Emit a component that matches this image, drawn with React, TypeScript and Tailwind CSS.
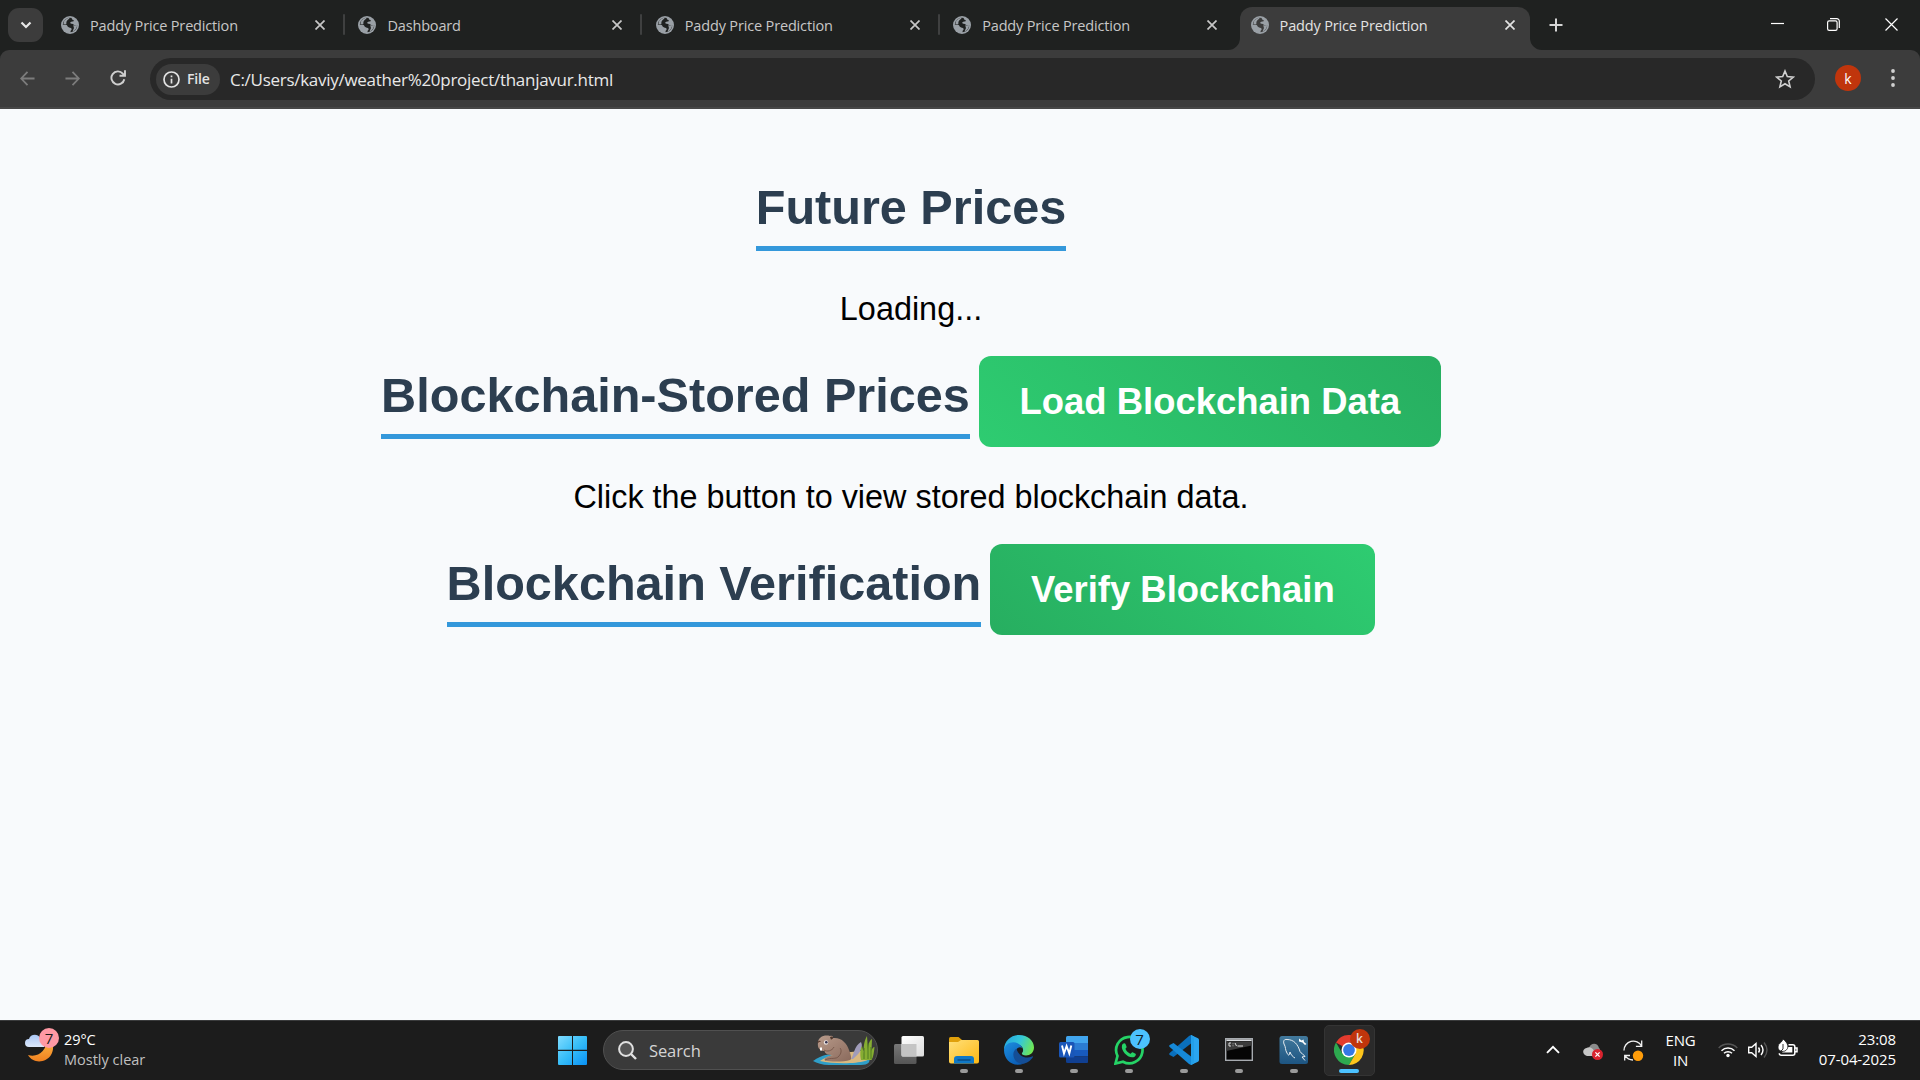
import React from 'react';

const ui = "font-['Open_Sans','Noto_Sans',sans-serif]";

function Globe() {
  return (
    <svg viewBox="0 0 18 18" className="h-[18px] w-[18px] shrink-0">
      <circle cx="9" cy="9" r="9" fill="#9aa0a6" />
      <path
        d="M10.800 2c-.3 1.300.6 1.600 1.500 2 .8.400.5 1.300-.3 1.500-1.200.2-2.300 0-2.700 1.100-.2.900.7 1.200 1.600 1.200 1.500 0 1.900 1.300 3 1.700.8.200 1.600 0 2.400-.1a7.300 7.300 0 0 1-6.600 6.900c-.4-.8-.1-1.400.4-2 .8-.8.700-1.700-.2-2.200-1.100-.6-2.500-.4-3.200-1.500-.4-.7-.3-1.500-1.200-1.700-1.200-.2-2.400-.1-3.700-.1A7.300 7.300 0 0 1 10.800 2Z"
        fill="currentColor"
      />
      <path d="M2.500 8.200C2.500 4.500 5.500 2 8.800 1.800 8 3.500 6.500 3.800 5.700 5.200c-.5 1-.2 2-.4 3Z" fill="#9aa0a6" />
      <path d="M12.500 8.900c1 .8 2.500.7 3.600.2a7 7 0 0 1-4.300 6.300c-.2-1.500 1.300-2.200 1.100-3.700-.1-1-.7-1.700-.4-2.800Z" fill="#9aa0a6" />
    </svg>
  );
}

function Cross({ color }: { color: string }) {
  return (
    <svg viewBox="0 0 10 10" className="h-[10px] w-[10px] shrink-0" stroke={color} strokeWidth="1.7" fill="none">
      <path d="M.5.500 9.500 9.500M9.500.500.500 9.500" />
    </svg>
  );
}

function Tab({ title, active, sep }: { title: string; active?: boolean; sep?: boolean }) {
  return (
    <div className="relative flex h-[50px] w-[297.4px] shrink-0 items-start pt-[7px]">
      {active && (
        <>
          <div className="absolute left-0 top-[7px] h-[43px] w-[290px] rounded-t-[12px] bg-[#3c3c3c]" />
          <svg viewBox="0 0 12 12" className="absolute bottom-0 left-[-12px] h-[12px] w-[12px]">
            <path d="M12 0v12H0A12 12 0 0 0 12 0Z" fill="#3c3c3c" />
          </svg>
          <svg viewBox="0 0 12 12" className="absolute bottom-0 left-[290px] h-[12px] w-[12px]">
            <path d="M0 0v12h12A12 12 0 0 1 0 0Z" fill="#3c3c3c" />
          </svg>
        </>
      )}
      <div className={`relative flex h-[36px] w-[275px] items-center pl-[11px] ${active ? 'text-[#3c3c3c]' : 'text-[#1f2120]'}`}>
        <Globe />
        <span className={`${ui} ml-[11px] flex-1 whitespace-nowrap pt-[1px] text-[14.500px] leading-[20px] tracking-[-0.160px] ${active ? 'text-[#e3e3e3]' : 'text-[#c7c7c7]'}`}>
          {title}
        </span>
        <Cross color={active ? '#e3e3e3' : '#c7c7c7'} />
      </div>
      {sep && <div className="relative ml-[18px] mt-[7px] h-[21px] w-[2px] rounded-full bg-[#3f4040]" />}
    </div>
  );
}

function TitleBar() {
  return (
    <div className="flex h-[50px] bg-[#1f2120]">
      <div className="ml-[8px] mt-[8px] flex h-[34px] w-[35px] shrink-0 items-center justify-center rounded-[11px] bg-[#3c3c3c]">
        <svg viewBox="0 0 12 8" className="h-[8px] w-[12px]" fill="none" stroke="#e8e8e8" strokeWidth="2.200">
          <path d="m1.500 1.500 4.500 4.500 4.500-4.500" />
        </svg>
      </div>
      <div className="ml-[7px] flex shrink-0">
        <Tab title="Paddy Price Prediction" sep />
        <Tab title="Dashboard" sep />
        <Tab title="Paddy Price Prediction" sep />
        <Tab title="Paddy Price Prediction" />
        <Tab title="Paddy Price Prediction" active />
      </div>
      <svg viewBox="0 0 14 14" className="ml-[12px] mt-[18px] h-[14px] w-[14px]" stroke="#d5d5d5" strokeWidth="2">
        <path d="M7 .5v13M.5 7h13" />
      </svg>
      <div className="ml-auto flex pr-[22px]">
        <svg viewBox="0 0 13 13" className="mr-[43px] mt-[17px] h-[13px] w-[13px]" stroke="#fff" strokeWidth="1.200">
          <path d="M0 6.500h13" />
        </svg>
        <svg viewBox="0 0 13 13" className="mr-[45px] mt-[18px] h-[13px] w-[13px]" stroke="#fff" strokeWidth="1.200" fill="none">
          <rect x=".6" y="2.800" width="9.500" height="9.500" rx="1.600" />
          <path d="M3 .7h6.800a2.500 2.500 0 0 1 2.500 2.500V10" />
        </svg>
        <svg viewBox="0 0 13 13" className="mt-[18px] h-[13px] w-[13px]" stroke="#fff" strokeWidth="1.200">
          <path d="m.5.500 12 12M12.500.500l-12 12" />
        </svg>
      </div>
    </div>
  );
}

function Toolbar() {
  return (
    <div className="bg-[#1f2120]">
      <div className="flex h-[59px] items-start rounded-t-[9px] border-b-2 border-[#474747] bg-[#3c3c3c]">
        <svg viewBox="0 0 16 16" className="ml-[20px] mt-[21px] h-[15px] w-[15px]" stroke="#7c7c7c" strokeWidth="1.900" fill="none">
          <path d="M15.500 8H1.500M8 1 1.300 8 8 15" />
        </svg>
        <svg viewBox="0 0 16 16" className="ml-[30px] mt-[21px] h-[15px] w-[15px]" stroke="#7c7c7c" strokeWidth="1.900" fill="none">
          <path d="M.5 8h14M8 1l6.700 7L8 15" />
        </svg>
        <svg viewBox="0 0 16 16" className="ml-[30px] mt-[20px] h-[16px] w-[16px]" stroke="#cfcfcf" strokeWidth="1.900" fill="none">
          <path d="M14.300 9.200A6.500 6.500 0 1 1 12.800 3.600l1.800 1.900M15 .2v5.500H9.500" />
        </svg>
        <div className="ml-[24px] mt-[8px] flex h-[42px] w-[1665px] items-center rounded-full bg-[#282828] pl-[6px]">
          <div className="flex h-[31px] w-[64px] items-center rounded-full bg-[#3c3c3c] pl-[7px]">
            <svg viewBox="0 0 17 17" className="h-[17px] w-[17px]" fill="none" stroke="#e3e3e3" strokeWidth="1.700">
              <circle cx="8.500" cy="8.500" r="7.500" />
              <path d="M8.500 7.700v4.800M8.500 4.500v1.800" />
            </svg>
            <span className={`${ui} ml-[7px] text-[14px] font-semibold leading-[20px] tracking-[-0.2px] text-[#e3e3e3]`}>File</span>
          </div>
          <span className={`${ui} ml-[10px] flex-1 pt-[1px] text-[17px] leading-[22px] tracking-[-0.280px] text-[#e8e8e8]`}>
            C:/Users/kaviy/weather%20project/thanjavur.html
          </span>
          <svg viewBox="0 0 20 20" className="mr-[20px] h-[20px] w-[20px]" fill="none" stroke="#d0d0d0" strokeWidth="1.600">
            <path d="m10 2 2.300 5.600 6 .5-4.600 3.900 1.400 5.900-5.100-3.200-5.100 3.200L6.300 12 1.700 8.100l6-.5Z" />
          </svg>
        </div>
        <div className={`${ui} ml-[20px] mt-[15px] flex h-[26px] w-[26px] items-center justify-center rounded-full bg-[#c0350c] text-[14px] text-white`}>k</div>
        <svg viewBox="0 0 4 20" className="ml-[30px] mt-[18px] h-[20px] w-[4px]" fill="#d0d0d0">
          <circle cx="2" cy="3" r="1.900" />
          <circle cx="2" cy="10" r="1.900" />
          <circle cx="2" cy="17" r="1.900" />
        </svg>
      </div>
    </div>
  );
}

function Heading({ children }: { children: React.ReactNode }) {
  return (
    <h2 className="h-[81px] whitespace-nowrap border-b-[5px] border-[#3498db] text-[48.600px] font-bold leading-[75px] text-[#2c3e50]">
      {children}
    </h2>
  );
}

function Content() {
  const button = 'h-[91px] whitespace-nowrap rounded-[12px] px-[40.700px] text-[36.450px] font-bold leading-[88px] text-white';
  return (
    <main className="flex h-[911px] w-[1822px] flex-col items-center pt-[61px] font-['Liberation_Sans',Arial,sans-serif] text-[32.400px] text-black">
      <Heading>Future Prices</Heading>
      <p className="mt-[40px] h-[37px] leading-[37px]">Loading...</p>
      <div className="mt-[28px] flex h-[92px] gap-[9px]">
        <div className="mt-[2px]"><Heading>Blockchain-Stored Prices</Heading></div>
        <button className={`${button} bg-[linear-gradient(45deg,#2ecc71,#27ae60)]`}>Load Blockchain Data</button>
      </div>
      <p className="mt-[31px] h-[37px] leading-[37px]">Click the button to view stored blockchain data.</p>
      <div className="mt-[28px] flex h-[92px] gap-[9px]">
        <div className="mt-[2px]"><Heading>Blockchain Verification</Heading></div>
        <button className={`${button} bg-[linear-gradient(45deg,#27ae60,#2ecc71)]`}>Verify Blockchain</button>
      </div>
    </main>
  );
}

function Beaver() {
  return (
    <svg viewBox="0 0 62 31" className="h-[31px] w-[62px]">
      <defs>
        <linearGradient id="fur" x1="0" y1="0" x2="1" y2="1">
          <stop offset="0" stopColor="#b89a8a" />
          <stop offset="1" stopColor="#8a6a5c" />
        </linearGradient>
      </defs>
      <path d="M0 26c4-3 10-6 18-7l38 3c2 5-1 8-8 8H16C9 30 4 28 0 26Z" fill="#2f9fc9" />
      <path d="M7 26c6-4 13-7 22-8l27-3c3 5 1 10-4 11-10 3-32 3-45 0Z" fill="#d9b97f" />
      <path d="M38 24c3-4 3-13 10-17 3 6-2 12-8 17Z" fill="#a09cba" />
      <path d="M5 8C5 2 11-.5 17 1c2-.5 3 0 3 2 8-1 14 5 16 12 2 5 3 9 1 10-6 2-20 2-25 .5-2-2 2-4 8-5.500-5 0-8-1-8.500-4C8 16 4 14 5 8Z" fill="url(#fur)" />
      <path d="M12 25c6-3 11 0 14-4 2-2 3-6 1-8" fill="none" stroke="#745547" strokeWidth=".9" />
      <path d="M11 15c3 2 8 1 10-3" fill="none" stroke="#745547" strokeWidth=".9" />
      <circle cx="13" cy="7.500" r="2.200" fill="#e9e2e0" />
      <circle cx="13.300" cy="7.300" r="1.300" fill="#34304c" />
      <path d="M17 2.200c1.500-1.300 3.500-.4 3 1.300l-2 1.300Z" fill="#4d362c" />
      <path d="M5 7.800c0-1.200 1.500-1.800 2.500-1.200" stroke="#5b3d30" strokeWidth="1.200" fill="none" />
      <path d="M7 12.500h2v3H7z" fill="#fff" />
      <path d="M48 25c-1-5-1-11 1-14l2 8c-1-6 0-13 3-18l1 14c0-5 1-9 4-11l-.5 12c1-3 1.500-4 3-4-.5 5-1 10-3 13Z" fill="#86ad32" />
      <path d="M51 24V13M55 24V8M58 24V12" stroke="#4d7b20" strokeWidth="1" />
    </svg>
  );
}

const badge = `absolute flex h-[20px] w-[20px] items-center justify-center rounded-full ${ui}`;

function TaskApp({ children, active, idle }: { children: React.ReactNode; active?: boolean; idle?: boolean }) {
  return (
    <div className={`relative mx-[2px] mt-[4px] flex h-[51px] w-[51px] flex-col items-center rounded-[5px] pt-[10px] ${active ? 'border border-[#343434] bg-[#2a2a2a] !pt-[9px]' : ''}`}>
      <div className="h-[30px] w-[30px]">{children}</div>
      {!idle && <div className={`mt-[4px] h-[4px] rounded-full ${active ? 'w-[20px] bg-[#4cc2ff]' : 'w-[8px] bg-[#9a9a9a]'}`} />}
    </div>
  );
}

const icon = 'block h-[30px] w-[30px]';

function TaskApps() {
  return (
    <div className="ml-[3.500px] flex">
      <TaskApp idle>
        <svg viewBox="0 0 30 30" className={icon}>
          <defs>
            <linearGradient id="tvA" x2="1" y2="1"><stop stopColor="#fff" /><stop offset="1" stopColor="#dcdcdc" /></linearGradient>
            <linearGradient id="tvB" x2="0" y2="1"><stop stopColor="#777" /><stop offset="1" stopColor="#555" /></linearGradient>
          </defs>
          <rect x="0" y="9" width="22.500" height="20" rx="1.500" fill="url(#tvB)" />
          <rect x="7.500" y="1" width="22.500" height="20.500" rx="1.500" fill="url(#tvA)" />
          <path d="M7.500 9h15v12.500h-13.500a1.500 1.500 0 0 1-1.500-1.500Z" fill="#c4c4c4" />
        </svg>
      </TaskApp>
      <TaskApp>
        <svg viewBox="0 0 30 30" className={icon}>
          <defs><linearGradient id="fold" x2="1" y2="1"><stop stopColor="#ffe07a" /><stop offset="1" stopColor="#fdb813" /></linearGradient></defs>
          <path d="M0 3.500Q0 2 1.500 2h8l3.500 3v5H0Z" fill="#e0a00b" />
          <path d="M0 7h9l3-2h16.500Q30 5 30 6.500v20q0 2-2 2H2q-2 0-2-2Z" fill="url(#fold)" />
          <path d="M5 28.500V24q0-3 3-3h14q3 0 3 3v4.500Z" fill="#0f78c6" />
          <path d="M8.500 25h13" stroke="#0a4c86" strokeWidth="1.500" />
        </svg>
      </TaskApp>
      <TaskApp>
        <svg viewBox="0 0 30 30" className={icon}>
          <defs>
            <linearGradient id="eA" x1="0" y1=".3" x2="1" y2=".6"><stop stopColor="#26a8e0" /><stop offset=".5" stopColor="#35c8d8" /><stop offset="1" stopColor="#72e84e" /></linearGradient>
            <linearGradient id="eB" x1="0" y1="0" x2=".7" y2="1"><stop stopColor="#1d8fe0" /><stop offset="1" stopColor="#0a5cb4" /></linearGradient>
          </defs>
          <path d="M0 15C0 6 7 0 15 0c9 0 15 6 15 12.500 0 5-4 8-8 8-3.500 0-4.500-1.500-4-2.500 2-2 1.500-6-2.500-8C9 8 2 10 0 15Z" fill="url(#eA)" />
          <path d="M0 15c1-7 9-9.500 14-6.500 2 1 4 3 4 4.500-3-2-7 1-7 6 0 6 5 10 9 9.500C9 33 0 25 0 15Z" fill="url(#eB)" />
          <path d="M12.500 13.500C9 16 8.500 20 10.500 24c2.500 4.500 7 5.500 10 4.500 3.500-1 7-4 8.300-6.300.4-.8-.2-1-.8-.7C22 24.500 14 21 12.500 13.500Z" fill="#144e96" />
        </svg>
      </TaskApp>
      <TaskApp>
        <svg viewBox="0 0 30 30" className={icon}>
          <path d="M7 2.500Q7 1 8.500 1H29v7H7Z" fill="#41a5ee" />
          <path d="M7 8h22v7H7Z" fill="#2b7cd3" />
          <path d="M7 15h22v6.500H7Z" fill="#185abd" />
          <path d="M7 21.500h22V27q0 1-1 1H8.500Q7 28 7 26.500Z" fill="#103f91" />
          <rect x="0" y="7" width="15.500" height="15.500" rx="1.500" fill="#1a56b8" />
          <path d="m3 10.500 2 8 2.600-7.500 2.700 7.500 2-8" fill="none" stroke="#fff" strokeWidth="1.900" />
        </svg>
      </TaskApp>
      <TaskApp>
        <svg viewBox="0 0 30 30" className={icon} fill="none" stroke="#25d366">
          <path d="M1.500 28.500 3.500 21A13.200 13.200 0 1 1 9 26.700Z" strokeWidth="2.700" />
          <path d="M8 10.200c.5-1.700 2.800-2.700 3.500-1.200l1.100 2.700c.3 1-1.300 1.700-1.100 2.400.8 2 2.700 3.800 4.700 4.600.8.300 1.500-1.700 2.400-1.400l2.900 1.400c1 .8-.4 3.100-2 3.500C14 23.600 6.500 15.500 8 10.200Z" fill="#25d366" stroke="none" />
        </svg>
        <div className={`${badge} left-[26px] top-[4px] bg-[#4cc2ff] text-[15px] text-[#10202a]`}>7</div>
      </TaskApp>
      <TaskApp>
        <svg viewBox="0 0 30 30" className={icon}>
          <path d="m22 0 7 3.200Q30 4 30 5v20q0 1-1 1.700L22 30Z" fill="#2aa5f0" />
          <path d="M22 0v8.500L4.500 22 0.700 20q-1-1 0-2L20 1Z" fill="#0a6fbc" />
          <path d="M22 30v-8.500L4.500 8 .7 10q-1 1 0 2L20 29Z" fill="#1689d8" />
          <path d="m22 0 3 1.500v27L22 30Z" fill="#239fe9" />
        </svg>
      </TaskApp>
      <TaskApp>
        <svg viewBox="0 0 30 30" className={icon}>
          <rect x="1.700" y="3.700" width="26.600" height="21.600" fill="#050505" stroke="#a7abb0" strokeWidth="1.400" />
          <path d="M2.400 4.400h25.200v1.700H2.400Z" fill="#d9dce0" />
          <path d="M2.400 6.500h25.200v4L2.400 16Z" fill="#3b3b3b" />
          <path d="M7 8H5v3h2M9 8.500v.7M9 10.500v.7M11 8l1.500 3M13.500 11H19" stroke="#ddd" strokeWidth="1" fill="none" />
        </svg>
      </TaskApp>
      <TaskApp>
        <svg viewBox="0 0 30 30" className={icon}>
          <defs><linearGradient id="my" x2="0" y2="1"><stop stopColor="#42799c" /><stop offset="1" stopColor="#1d5582" /></linearGradient></defs>
          <rect x=".5" y="1" width="28.500" height="28" rx="2.500" fill="url(#my)" />
          <path d="M5 9c-1-3 0-5 3-4.500 7 0 11 5 13 12 1 2 4 3 5 5l-3 .500 3 3.500M5 9c2 3 1 6 3 9 1 2 2 3 2.500 1l.5-2c1 3 3 5 5 6" stroke="#e7edf1" strokeWidth="1" fill="none" />
          <path d="m20 3.500 2.500 2 2-1 .5 2.500 2.500 2-1.500 1-2.500-2.500-3.500-1Z" fill="#fff" />
        </svg>
      </TaskApp>
      <TaskApp active>
        <svg viewBox="0 0 30 30" className={icon}>
          <path d="M15 15 2 7.500A15 15 0 0 1 28 7.500H15Z" fill="#e33b2e" />
          <path d="M15 15 21.500 18.700 15 30A15 15 0 0 1 2 7.500L8.500 18.700Z" fill="#2da94f" />
          <path d="M15 8h13A15 15 0 0 1 15 30l6.500-11.300Z" fill="#fdc51b" />
          <circle cx="15" cy="15" r="7.500" fill="#fff" />
          <circle cx="15" cy="15" r="5.900" fill="#3578e5" />
        </svg>
        <div className={`${badge} left-[25px] top-[3px] bg-[#c0350c] text-[12px] font-semibold text-[#e9ddd9]`}>k</div>
      </TaskApp>
    </div>
  );
}

function Taskbar() {
  return (
    <footer className={`flex h-[60px] border-t border-[#3a3b3c] bg-[#1c1c1c] ${ui}`}>
      <div className="relative ml-[25px] w-[39px]">
        <svg viewBox="0 0 30 30" className="mt-[12px] h-[30px] w-[30px]">
          <defs>
            <linearGradient id="moon" x2="0" y2="1"><stop stopColor="#ffc24a" /><stop offset="1" stopColor="#f08020" /></linearGradient>
            <linearGradient id="cloud" x2="0" y2="1"><stop stopColor="#a9c6f4" /><stop offset="1" stopColor="#dce8fb" /></linearGradient>
          </defs>
          <path d="M22 3c6 4 8 12 4 19-5 8-18 9-23 0 10 3 20-4 19-19Z" fill="url(#moon)" />
          <path d="M4 14a4 4 0 0 1 0-8c1-5 9-6 11-1l4 2v7Z" fill="url(#cloud)" />
        </svg>
        <div className={`${badge} left-[14px] top-[7px] bg-[#ff99a4] text-[15px] text-[#1c1c1c]`}>7</div>
      </div>
      <div className="w-[494px] pt-[9px] text-[14.500px] leading-[20px]">
        <div className="tracking-[-0.1px] text-white">29°C</div>
        <div className="text-[#c0c0c0]">Mostly clear</div>
      </div>
      <svg viewBox="0 0 29 29" className="mt-[15px] h-[29px] w-[29px] shrink-0">
        <defs><linearGradient id="win" x2="1" y2="1"><stop stopColor="#80dcff" /><stop offset=".5" stopColor="#36bdf8" /><stop offset="1" stopColor="#0991f5" /></linearGradient></defs>
        <path d="M1 0h13v13.800H0V1Q0 0 1 0ZM15 0h13q1 0 1 1v12.800H15ZM0 15h14v14H1q-1 0-1-1ZM15 15h14v13q0 1-1 1H15Z" fill="url(#win)" />
      </svg>
      <div className="ml-[16px] mt-[9px] flex h-[40px] w-[275px] shrink-0 items-center rounded-full border border-[#505050] bg-[#3a3a3a] pl-[14px]">
        <svg viewBox="0 0 19 19" className="h-[19px] w-[19px]" fill="none" stroke="#e0e0e0" strokeWidth="2">
          <circle cx="8" cy="8" r="6.900" fill="#555" />
          <path d="m13 13 5 5" strokeWidth="2.400" />
        </svg>
        <span className="ml-[12px] flex-1 pt-[2px] text-[16.500px] tracking-[-0.1px] text-[#d4d4d4]">Search</span>
        <div className="mr-[2px] mt-[1px]"><Beaver /></div>
      </div>
      <TaskApps />
      <div className="ml-[169px] flex flex-1">
        <svg viewBox="0 0 14 9" className="mt-[24px] h-[9px] w-[14px]" fill="none" stroke="#fff" strokeWidth="1.900"><path d="m1 7.800 6-6 6 6" /></svg>
        <svg viewBox="0 0 20 17" className="ml-[23px] mt-[22px] h-[17px] w-[20px]">
          <path d="M6 5C8-1 15 0 16 5q2 1 0 7H5Z" fill="#8b8b8b" />
          <path d="M4 13c-5-1-5-7-.5-8 3-2 6 0 7 2l6 1v5Z" fill="#c6c6c6" />
          <circle cx="14.500" cy="11.500" r="5.500" fill="#d9232e" />
          <path d="m12.400 9.400 4.200 4.200m0-4.200-4.200 4.200" stroke="#fff" strokeWidth="1.300" />
        </svg>
        <svg viewBox="0 0 21 21" className="ml-[20px] mt-[19px] h-[21px] w-[21px]" fill="none" stroke="#f1f1f1" strokeWidth="1.300">
          <path d="M1 10.500A9.300 9.300 0 0 1 18.500 6M18.700 .5v5.800h-5.800M1.700 20.500v-5H7M2 15.700q3 4.300 8 4.300" />
          <circle cx="15" cy="15.700" r="5.200" fill="#ff9d0a" stroke="none" />
        </svg>
        <div className="ml-[18px] w-[38px] pt-[9px] text-center text-[15px] leading-[20px] tracking-[-0.2px] text-white">
          <div>ENG</div><div>IN</div>
        </div>
        <svg viewBox="0 0 20 16" className="ml-[18px] mt-[21px] h-[16px] w-[20px]" fill="none" stroke="#fff" strokeWidth="1.500">
          <path d="M.7 6a13 13 0 0 1 18.600 0" stroke="#555" />
          <path d="M3.500 8.700a9.200 9.200 0 0 1 13 0M6 11.300a5.700 5.700 0 0 1 8 0" />
          <circle cx="10" cy="13.500" r="1.700" fill="#fff" stroke="none" />
        </svg>
        <svg viewBox="0 0 20 18" className="ml-[10px] mt-[20px] h-[18px] w-[20px]" fill="none" stroke="#fff" strokeWidth="1.400">
          <path d="M.7 6.200v5.600h3L8 15.500v-13L3.700 6.200ZM10.500 6.500q2 2.500 0 5M13 4q4 5 0 10" />
          <path d="M16 1.500q6 7.500 0 15" stroke="#555" />
        </svg>
        <svg viewBox="0 0 21 18" className="ml-[9px] mt-[18px] h-[18px] w-[21px]" fill="none" stroke="#fff" strokeWidth="1.500">
          <path d="M11.500 5.700h4.300q2 0 2 2v6.600q0 2-2 2H4.300q-2 0-2-2M18 9h2v3.700h-2" />
          <path d="M10 8h5.300v5.500H5Z" fill="#fff" stroke="none" />
          <path d="M6 0c5 4 7 9 2 12-3 1-7 0-7-4 0-4 4-4 5-8Z" fill="#fff" stroke="#1c1c1c" strokeWidth=".8" />
          <path d="M6 5v5l-4 4" stroke="#1c1c1c" strokeWidth=".9" />
        </svg>
        <div className="ml-auto mr-[24px] pt-[8px] text-right text-[15px] leading-[20px] tracking-[-0.100px] text-white">
          <div>23:08</div><div>07-04-2025</div>
        </div>
      </div>
    </footer>
  );
}

export default function App() {
  return (
    <div className="flex h-[1080px] w-[1920px] flex-col overflow-hidden bg-[#f8fafc]">
      <TitleBar />
      <Toolbar />
      <Content />
      <Taskbar />
    </div>
  );
}
